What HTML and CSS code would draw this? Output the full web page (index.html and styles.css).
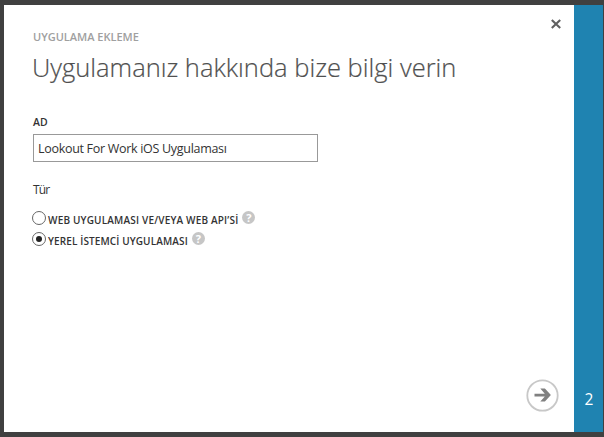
FILE: index.html
```html
<!DOCTYPE html>
<html lang="tr">
<head>
<meta charset="utf-8">
<title>Uygulama Ekleme</title>
<link rel="stylesheet" href="styles.css">
</head>
<body>
<div class="dialog">
  <main class="content">
    <button class="close" aria-label="Kapat">
      <svg width="12" height="10" viewBox="0 0 12 10"><path d="M1.8 .9 10.2 9.1M10.2 .9 1.8 9.1"/></svg>
    </button>
    <p class="eyebrow">UYGULAMA EKLEME</p>
    <h1 class="title">Uygulamanız hakkında bize bilgi verin</h1>
    <label class="label" for="name">AD</label>
    <input class="field" id="name" type="text" value="Lookout For Work iOS Uygulaması">
    <p class="kind">Tür</p>
    <div class="options">
      <label class="option">
        <span class="radio"></span><span class="text web">WEB UYGULAMASI VE/VEYA WEB API’Sİ</span><span class="help">?</span>
      </label>
      <label class="option">
        <span class="radio checked"></span><span class="text native">YEREL İSTEMCİ UYGULAMASI</span><span class="help">?</span>
      </label>
    </div>
    <button class="next" aria-label="İleri">
      <svg width="34" height="34" viewBox="0 0 34 34"><circle cx="17.5" cy="17.5" r="15.2"/><path d="M9.5 15.7h10.3L15.3 10.6h4.6l6 6.5-6 6.5h-4.6l4.5-5H9.5z"/></svg>
    </button>
  </main>
  <aside class="steps">2</aside>
</div>
</body>
</html>
```
FILE: styles.css
```css
* { box-sizing: border-box; }
body {
  margin: 0;
  background: #404040;
  font-family: "Open Sans", "Noto Sans", sans-serif;
  color: #333;
}
.dialog {
  display: flex;
  height: 437px;
  padding: 5px 1px 5px 4px;
}
.content {
  position: relative;
  flex: 1;
  padding: 24px 29px 0;
  background: #fff;
}
.steps {
  display: flex;
  align-items: flex-end;
  justify-content: center;
  width: 29px;
  padding: 0 0 22px 1px;
  background: #1f83b1;
  color: #fff;
  font-size: 15.5px;
  line-height: 22px;
}
p, h1 { margin: 0; }
button { padding: 0; border: 0; background: none; }
svg { display: block; }
.close { position: absolute; top: 14px; right: 12px; }
.close path { fill: none; stroke: #606060; stroke-width: 2.1; }
.eyebrow {
  height: 16px;
  color: #a0a0a0;
  font-size: 11px;
  font-weight: 600;
  line-height: 16px;
}
.title {
  height: 36px;
  margin: 4px 0 0 -1px;
  color: #505050;
  font-size: 25.5px;
  font-weight: 300;
  line-height: 36px;
  white-space: nowrap;
  -webkit-text-stroke: .2px #505050;
}
.label {
  display: block;
  height: 16px;
  margin-top: 29px;
  font-size: 10.5px;
  font-weight: 600;
  line-height: 16px;
}
.field {
  display: block;
  width: 285px;
  height: 28px;
  margin-top: 4px;
  padding: 0 4px;
  border: 1px solid #999;
  background: #fff;
  color: #333;
  font: 12.5px "Open Sans", "Noto Sans", sans-serif;
  letter-spacing: -.3px;
}
.kind {
  height: 18px;
  margin-top: 19px;
  font-size: 12px;
  line-height: 18px;
  letter-spacing: -.9px;
}
.options { margin: 8px 0 0 -1px; }
.option {
  display: flex;
  align-items: center;
  height: 21px;
}
.radio {
  display: flex;
  align-items: center;
  justify-content: center;
  width: 14px;
  height: 14px;
  margin-right: 2px;
  border: 1px solid #666;
  border-radius: 50%;
}
.checked::before {
  content: "";
  width: 6px;
  height: 6px;
  border-radius: 50%;
  background: #222;
}
.text {
  padding-top: 5px;
  font-size: 10px;
  font-weight: 600;
  line-height: 16px;
  white-space: nowrap;
}
.web { letter-spacing: .18px; }
.native { letter-spacing: .12px; }
.help {
  width: 13px;
  height: 13px;
  margin-left: 4px;
  border-radius: 50%;
  background: #c6c6c6;
  color: #fff;
  font-size: 11px;
  font-weight: 700;
  line-height: 13px;
  text-align: center;
}
.next { position: absolute; right: 15px; bottom: 20px; }
.next circle { fill: none; stroke: #c8c8c8; stroke-width: 1.8; }
.next path { fill: #808080; }
```
